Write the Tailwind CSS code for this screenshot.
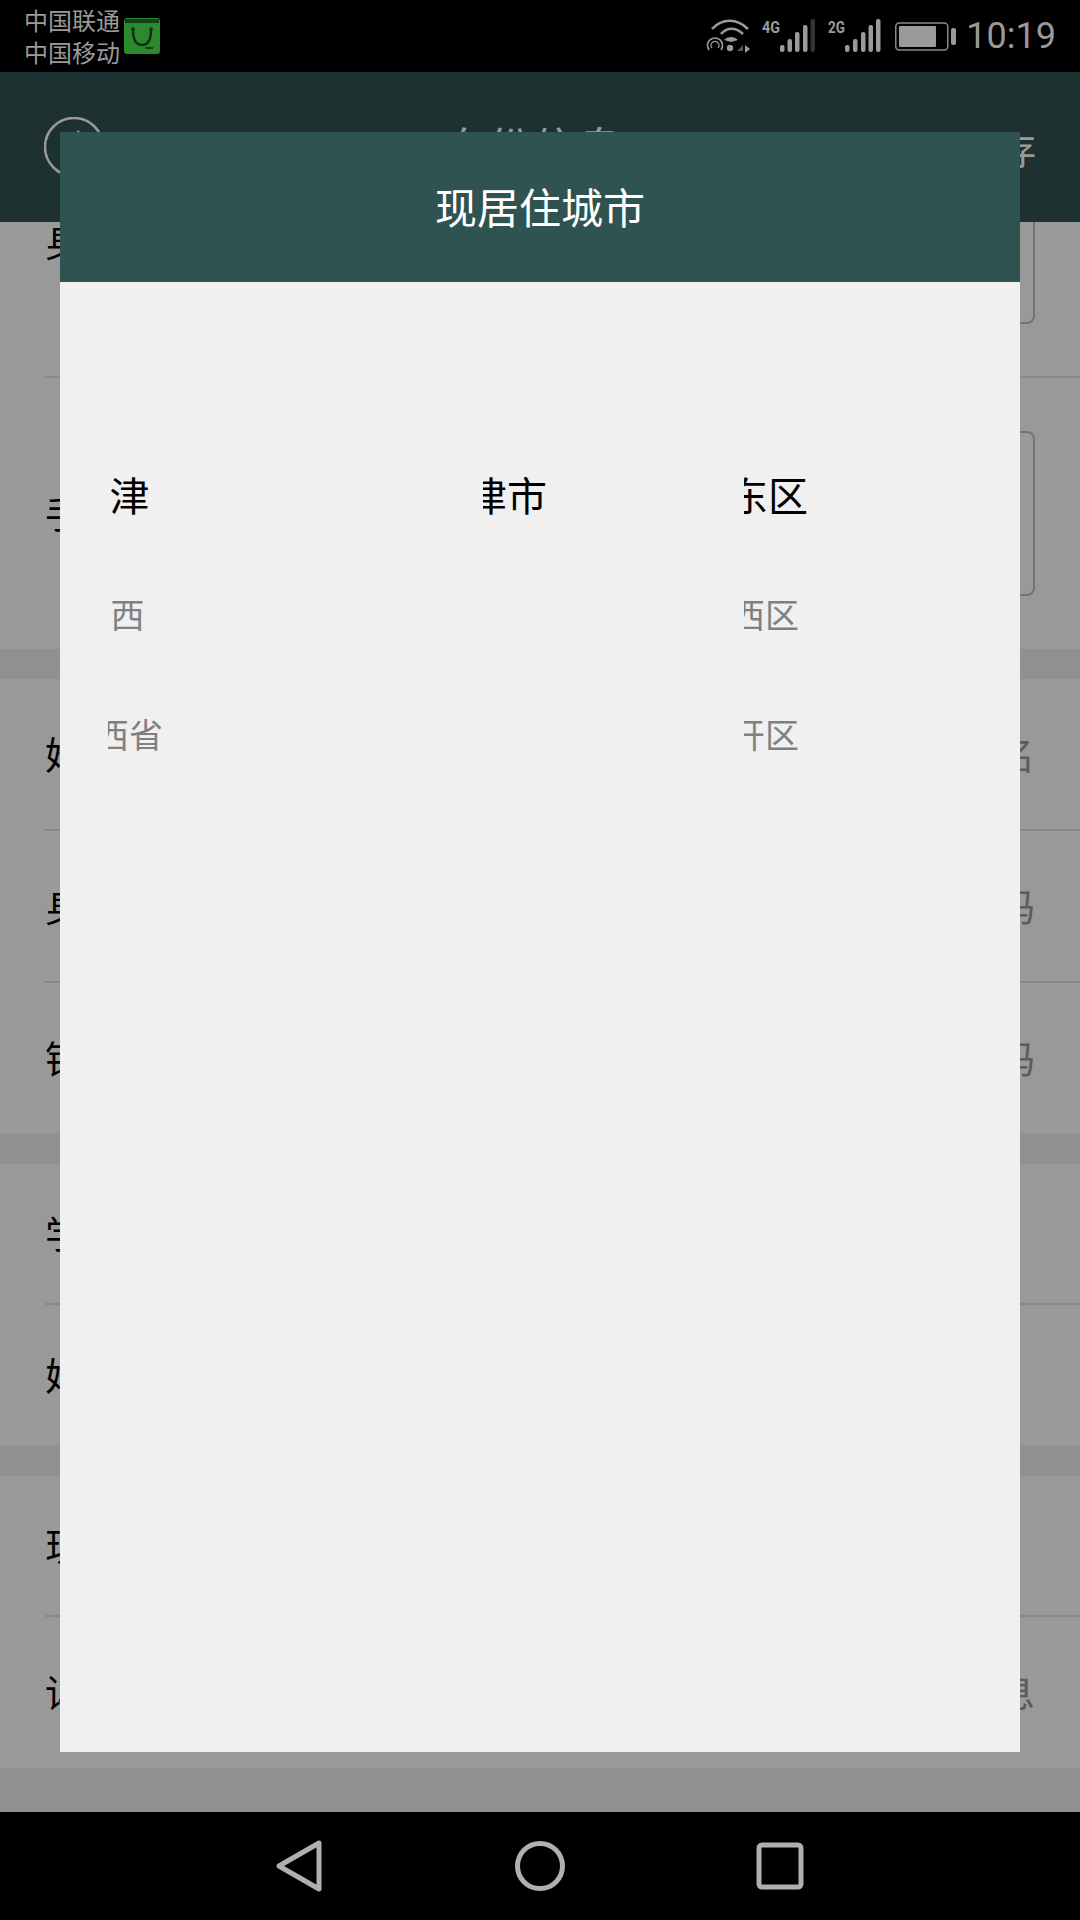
<!DOCTYPE html>
<html lang="zh-CN">
<head>
    <meta charset="UTF-8">
    <meta name="viewport" content="width=device-width, initial-scale=1.0">
    <title>现居住城市</title>
    <script src="https://cdn.jsdelivr.net/npm/@tailwindcss/browser@4"></script>
</head>
<body class="bg-black">
    <div class="w-[1080px] h-[1920px] flex flex-col overflow-hidden font-['Noto_Sans_CJK_SC',sans-serif]">
        <!-- Status bar -->
        <div class="h-[72px] shrink-0 bg-black flex pl-[24px] pr-[24px] text-[#9a9a9a]">
            <div class="w-[100px] pt-[4px] text-[24px] leading-[32px] whitespace-nowrap">
                <div>中国联通</div>
                <div>中国移动</div>
            </div>
            <svg class="mt-[18px] w-[36px] h-[36px]" viewBox="0 0 36 36">
                <rect width="36" height="36" rx="3" fill="#2c8a2c"/>
                <rect x="1" y="1" width="34" height="4" fill="#14401a"/>
                <path d="M9 12C9 22 12 27 18 27S27 22 27 12" fill="none" stroke="#0f2f14" stroke-width="2.400"/>
                <circle cx="9" cy="11" r="1.800" fill="#0f2f14"/>
                <circle cx="27" cy="11" r="1.800" fill="#0f2f14"/>
                <path d="M21 30h8" stroke="#14401a" stroke-width="2"/>
            </svg>
            <div class="ml-auto flex items-start">
                <svg class="mt-[19px] w-[44px] h-[34px]" viewBox="0 0 44 34">
                    <g fill="none" stroke="#9a9a9a" stroke-width="2.600">
                        <path d="M6 10C16 -1 31 -1 42 10"/>
                        <path d="M15 15C21 8 30 8 37 15"/>
                        <path d="M3 31a7.500 7.500 0 1 1 12 0" stroke-width="1.600"/>
                        <path d="M6 29a4 4 0 1 1 6 0" stroke-width="1.400"/>
                    </g>
                    <path d="M18 21C22 17 28 17 32 21L25 23Z" fill="#9a9a9a"/>
                    <circle cx="24" cy="29" r="3.200" fill="#9a9a9a"/>
                    <path d="M37 32V26L31 32Z" fill="#555"/>
                    <path d="M39 26L44 30L39 34Z" fill="#9a9a9a"/>
                </svg>
                <svg class="ml-[12px] mt-[19px] w-[53px] h-[34px]" viewBox="0 0 53 34">
                    <text x="0" y="14" textLength="18" lengthAdjust="spacingAndGlyphs" font-family="Roboto" font-weight="700" font-size="16" fill="#9a9a9a">4G</text>
                    <g fill="#9a9a9a">
                        <rect x="18" y="26" width="4.500" height="7" rx="2"/>
                        <rect x="25.500" y="20" width="4.500" height="13" rx="2"/>
                        <rect x="33" y="13" width="4.500" height="20" rx="2"/>
                        <rect x="41" y="6" width="4.500" height="27" rx="2"/>
                    </g>
                    <rect x="48.500" y="0" width="4.500" height="33" rx="2" fill="#333"/>
                </svg>
                <svg class="ml-[13px] mt-[19px] w-[53px] h-[34px]" viewBox="0 0 53 34">
                    <text x="0" y="14" textLength="17" lengthAdjust="spacingAndGlyphs" font-family="Roboto" font-weight="700" font-size="16" fill="#9a9a9a">2G</text>
                    <g fill="#9a9a9a">
                        <rect x="17" y="26" width="4.500" height="7" rx="2"/>
                        <rect x="25" y="20" width="4.500" height="13" rx="2"/>
                        <rect x="33" y="13" width="4.500" height="20" rx="2"/>
                        <rect x="40.500" y="6" width="4.500" height="27" rx="2"/>
                        <rect x="48" y="0" width="4.500" height="33" rx="2"/>
                    </g>
                </svg>
                <svg class="ml-[14px] mt-[22px] w-[61px] h-[29px]" viewBox="0 0 61 29">
                    <rect x="0.750" y="1" width="52" height="27" rx="3.500" fill="none" stroke="#8a8a8a" stroke-width="1.500"/>
                    <rect x="4" y="4" width="37" height="21" rx="1" fill="#9a9a9a"/>
                    <rect x="56" y="6" width="5" height="17" rx="2" fill="#9a9a9a"/>
                </svg>
                <div class="ml-[10px] mt-[14px] text-[36px] leading-[44px] font-['Roboto',sans-serif] text-[#999]">10:19</div>
            </div>
        </div>

        <!-- Page under the dialog -->
        <div class="relative flex-1 bg-[#f0f0f0] overflow-hidden">
            <div class="relative z-10 h-[150px] bg-[#2f5350] flex items-center justify-between pl-[44px] pr-[44px] text-white">
                <svg class="w-[60px] h-[60px]" viewBox="0 0 60 60">
                    <circle cx="30" cy="30" r="29" fill="none" stroke="white" stroke-width="2.500"/>
                    <path d="M35 14L20 30L35 46" fill="none" stroke="white" stroke-width="2.500"/>
                </svg>
                <div class="text-[45px]">身份信息</div>
                <div class="text-[38px]">保存</div>
            </div>
            <div class="mt-[-116px] bg-white">
                <div class="h-[272px] ml-[45px] pr-[45px] flex items-center justify-between border-b-2 border-[#e3e3e3] text-[38px]">
                    <span class="mb-[4px]">身份证</span>
                    <div class="w-[400px] h-[165px] border-2 border-[#c0c0c0] rounded-[8px]"></div>
                </div>
                <div class="h-[271px] ml-[45px] pr-[45px] flex items-center justify-between text-[38px]">
                    <span class="mb-[4px]">手持身份证</span>
                    <div class="w-[400px] h-[165px] border-2 border-[#c0c0c0] rounded-[8px]"></div>
                </div>
            </div>
            <div class="h-[30px]"></div>
            <div class="bg-white text-[38px]">
                <div class="h-[152px] ml-[45px] pr-[45px] pb-[4px] flex items-center justify-between border-b-2 border-[#e3e3e3]">
                    <span>姓名</span><span class="text-[#999]">请输入姓名</span>
                </div>
                <div class="h-[152px] ml-[45px] pr-[45px] pb-[4px] flex items-center justify-between border-b-2 border-[#e3e3e3]">
                    <span>身份证号</span><span class="text-[#999]">请输入身份证号码</span>
                </div>
                <div class="h-[151px] ml-[45px] pr-[45px] pb-[4px] flex items-center justify-between">
                    <span>银行卡号</span><span class="text-[#999]">请输入银行卡号码</span>
                </div>
            </div>
            <div class="h-[30px]"></div>
            <div class="bg-white text-[38px]">
                <div class="h-[141px] ml-[45px] pr-[45px] pb-[4px] flex items-center border-b-2 border-[#e3e3e3]">
                    <span>学历</span>
                </div>
                <div class="h-[141px] ml-[45px] pr-[45px] pb-[4px] flex items-center">
                    <span>婚姻状况</span>
                </div>
            </div>
            <div class="h-[30px]"></div>
            <div class="bg-white text-[38px]">
                <div class="h-[141px] ml-[45px] pr-[45px] pb-[4px] flex items-center border-b-2 border-[#e3e3e3]">
                    <span>现居住城市</span>
                </div>
                <div class="h-[151px] ml-[45px] pr-[45px] pb-[4px] flex items-center justify-between">
                    <span>详细地址</span><span class="text-[#999]">请输入详细信息</span>
                </div>
            </div>

            <!-- Dim layer and city picker dialog -->
            <div class="absolute inset-0 z-20 bg-black/40 flex justify-center pt-[60px]">
                <div class="w-[960px] h-[1620px] bg-[#f0f0f0] flex flex-col">
                    <div class="h-[150px] shrink-0 pb-[4px] bg-[#2f5350] flex items-center justify-center text-white text-[42px]">现居住城市</div>
                    <div class="flex pt-[152px]">
                        <div class="ml-[48px] w-[100px] overflow-hidden">
                            <div class="w-[200px] ml-[-96px] text-center whitespace-nowrap">
                                <div class="h-[120px] pr-[5px] flex items-center justify-center text-black text-[40px]">天津</div>
                                <div class="h-[120px] pr-[3px] pb-[2px] flex items-center justify-center text-[#808080] text-[34px]">山西</div>
                                <div class="h-[120px] pb-[2px] flex items-center justify-center text-[#808080] text-[34px]">江西省</div>
                            </div>
                        </div>
                        <div class="ml-[275px] w-[100px] overflow-hidden">
                            <div class="w-[200px] ml-[-96px] text-center whitespace-nowrap">
                                <div class="h-[120px] flex items-center justify-center text-black text-[40px]">天津市</div>
                            </div>
                        </div>
                        <div class="ml-[161px] w-[100px] overflow-hidden">
                            <div class="w-[200px] ml-[-96px] text-center whitespace-nowrap">
                                <div class="h-[120px] flex items-center justify-center text-black text-[40px]">河东区</div>
                                <div class="h-[120px] pb-[2px] flex items-center justify-center text-[#808080] text-[34px]">河西区</div>
                                <div class="h-[120px] pb-[2px] flex items-center justify-center text-[#808080] text-[34px]">南开区</div>
                            </div>
                        </div>
                    </div>
                </div>
            </div>
        </div>

        <!-- Navigation bar -->
        <div class="h-[108px] shrink-0 bg-black flex items-center pl-[276px]">
            <svg class="w-[46px] h-[52px]" viewBox="0 0 46 52">
                <path d="M43 3L43 49L3 26Z" fill="none" stroke="#b0b0b0" stroke-width="5" stroke-linejoin="round"/>
            </svg>
            <svg class="ml-[192px] w-[52px] h-[52px]" viewBox="0 0 52 52">
                <circle cx="26" cy="26" r="22.500" fill="none" stroke="#b0b0b0" stroke-width="5"/>
            </svg>
            <svg class="ml-[190px] w-[48px] h-[48px]" viewBox="0 0 48 48">
                <rect x="3" y="3" width="42" height="42" rx="3" fill="none" stroke="#b0b0b0" stroke-width="5"/>
            </svg>
        </div>
    </div>
</body>
</html>
